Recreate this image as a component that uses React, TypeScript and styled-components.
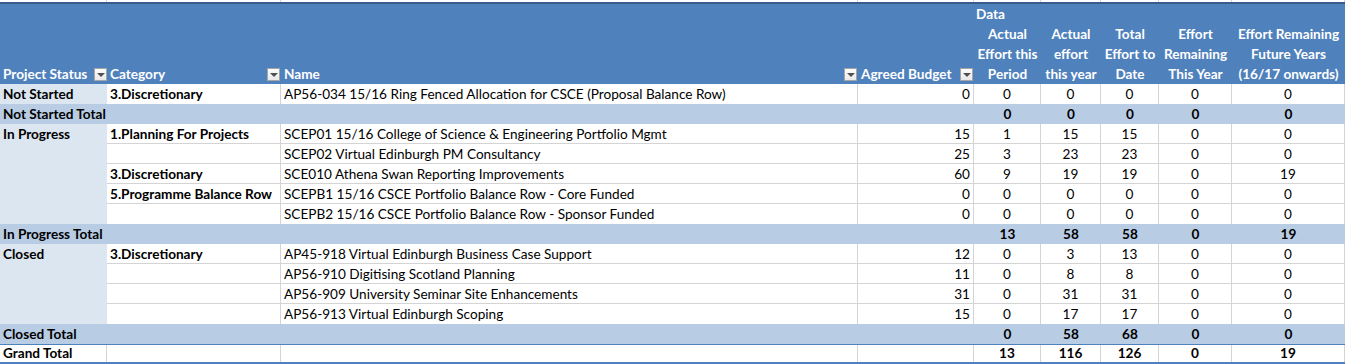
import React from 'react';
import styled, { createGlobalStyle } from 'styled-components';

const COLS = '107px 174px 577px 116px 67px 60px 58px 73px 113px';
const GRID = '#D4D4D4';
const HEAD = '#4F81BD';
const DARK = '#385D8A';
const TOTAL = '#B8CCE4';
const STATUS = '#DCE6F1';

const GlobalStyle = createGlobalStyle`
  html, body { margin: 0; padding: 0; background: #ffffff; }
  body { font-family: Lato, "Open Sans", sans-serif; }
`;

const Sheet = styled.div`
  width: 1345px;
  font-family: Lato, "Open Sans", sans-serif;
  font-size: 13.6px;
  color: #000;
`;

const GridRow = styled.div`
  display: grid;
  grid-template-columns: ${COLS};
`;

const TopStrip = styled(GridRow)`
  height: 2px;
  border-bottom: 2px solid ${DARK};
`;

const StripCell = styled.div`
  border-right: 1px solid ${GRID};
`;

const Header = styled.div`
  display: grid;
  grid-template-columns: ${COLS};
  grid-template-rows: repeat(4, 20px);
  background: ${HEAD};
  color: #fff;
  font-weight: 700;
  line-height: 20px;
  white-space: nowrap;
`;

const HeadLabel = styled.div<{ $col: number }>`
  grid-column: ${(p) => p.$col};
  grid-row: 4;
  display: flex;
  align-items: center;
  justify-content: space-between;
  padding-left: 3px;
  padding-right: ${(p) => (p.$col === 1 ? 0 : 1)}px;
  min-width: 0;
`;

const FilterButton = styled.span`
  width: 13px;
  height: 13px;
  box-sizing: border-box;
  border: 1px solid #a6a6a6;
  background: linear-gradient(#fdfdfd, #e9e9e9);
  display: flex;
  align-items: center;
  justify-content: center;
  flex-shrink: 0;
  &::after {
    content: '';
    width: 0;
    height: 0;
    border-left: 4px solid transparent;
    border-right: 4px solid transparent;
    border-top: 4px solid #505050;
    margin-top: 1px;
  }
`;

const DataTitle = styled.div`
  grid-column: 5;
  grid-row: 1;
  padding-left: 2px;
`;

const HeadMeasure = styled.div<{ $col: number }>`
  grid-column: ${(p) => p.$col};
  grid-row: 2 / span 3;
  display: flex;
  flex-direction: column;
  align-items: center;
  overflow: visible;
`;

const Row = styled(GridRow)<{ $variant: 'data' | 'total' | 'grand' }>`
  height: 20px;
  box-sizing: border-box;
  line-height: ${(p) => (p.$variant === 'grand' ? 17 : 20)}px;
  background: ${(p) => (p.$variant === 'total' ? TOTAL : '#fff')};
  font-weight: ${(p) => (p.$variant === 'data' ? 400 : 700)};
  border-top: ${(p) => (p.$variant === 'grand' ? `1px solid ${HEAD}` : 'none')};
  border-bottom: ${(p) => (p.$variant === 'grand' ? `2px solid ${HEAD}` : 'none')};
  white-space: nowrap;
`;

const StatusCell = styled.div<{ $grand?: boolean }>`
  background: ${(p) => (p.$grand ? '#fff' : STATUS)};
  font-weight: 700;
  padding-left: 3px;
  border-right: ${(p) => (p.$grand ? `1px solid ${GRID}` : 'none')};
`;

const Cell = styled.div<{ $align?: 'left' | 'right' | 'center'; $bold?: boolean; $lastInGroup?: boolean; $grand?: boolean }>`
  box-sizing: border-box;
  border-right: 1px solid ${GRID};
  border-bottom: ${(p) => (p.$grand || p.$lastInGroup ? 'none' : `1px solid ${GRID}`)};
  text-align: ${(p) => p.$align ?? 'left'};
  font-weight: ${(p) => (p.$bold ? 700 : 'inherit')};
  padding: ${(p) => (p.$align === 'right' ? '0 3px 0 0' : p.$align === 'center' ? '0' : '0 0 0 3px')};
  overflow: hidden;
`;

const TotalLabel = styled.div`
  grid-column: 1 / span 4;
  padding-left: 3px;
`;

const TotalValue = styled.div`
  text-align: center;
`;

type DataRow = {
  kind: 'data';
  status?: string;
  category?: string;
  name: string;
  budget: number;
  vals: number[];
  last?: boolean;
};
type TotalRow = { kind: 'total' | 'grand'; label: string; vals: number[] };

const rows: (DataRow | TotalRow)[] = [
  { kind: 'data', status: 'Not Started', category: '3.Discretionary', name: 'AP56-034 15/16 Ring Fenced Allocation for CSCE (Proposal Balance Row)', budget: 0, vals: [0, 0, 0, 0, 0], last: true },
  { kind: 'total', label: 'Not Started Total', vals: [0, 0, 0, 0, 0] },
  { kind: 'data', status: 'In Progress', category: '1.Planning For Projects', name: 'SCEP01 15/16 College of Science & Engineering Portfolio Mgmt', budget: 15, vals: [1, 15, 15, 0, 0] },
  { kind: 'data', name: 'SCEP02 Virtual Edinburgh PM Consultancy', budget: 25, vals: [3, 23, 23, 0, 0] },
  { kind: 'data', category: '3.Discretionary', name: 'SCE010 Athena Swan Reporting Improvements', budget: 60, vals: [9, 19, 19, 0, 19] },
  { kind: 'data', category: '5.Programme Balance Row', name: 'SCEPB1 15/16 CSCE Portfolio Balance Row - Core Funded', budget: 0, vals: [0, 0, 0, 0, 0] },
  { kind: 'data', name: 'SCEPB2 15/16 CSCE Portfolio Balance Row - Sponsor Funded', budget: 0, vals: [0, 0, 0, 0, 0], last: true },
  { kind: 'total', label: 'In Progress Total', vals: [13, 58, 58, 0, 19] },
  { kind: 'data', status: 'Closed', category: '3.Discretionary', name: 'AP45-918 Virtual Edinburgh Business Case Support', budget: 12, vals: [0, 3, 13, 0, 0] },
  { kind: 'data', name: 'AP56-910 Digitising Scotland Planning', budget: 11, vals: [0, 8, 8, 0, 0] },
  { kind: 'data', name: 'AP56-909 University Seminar Site Enhancements', budget: 31, vals: [0, 31, 31, 0, 0] },
  { kind: 'data', name: 'AP56-913 Virtual Edinburgh Scoping', budget: 15, vals: [0, 17, 17, 0, 0], last: true },
  { kind: 'total', label: 'Closed Total', vals: [0, 58, 68, 0, 0] },
  { kind: 'grand', label: 'Grand Total', vals: [13, 116, 126, 0, 19] },
];

const measures: string[][] = [
  ['Actual', 'Effort this', 'Period'],
  ['Actual', 'effort', 'this year'],
  ['Total', 'Effort to', 'Date'],
  ['Effort', 'Remaining', 'This Year'],
  ['Effort Remaining', 'Future Years', '(16/17 onwards)'],
];

export default function App() {
  return (
    <Sheet>
      <GlobalStyle />
      <TopStrip>
        {Array.from({ length: 9 }).map((_, i) => (
          <StripCell key={i} />
        ))}
      </TopStrip>
      <Header>
        <HeadLabel $col={1}>
          Project Status
          <FilterButton />
        </HeadLabel>
        <HeadLabel $col={2}>
          Category
          <FilterButton />
        </HeadLabel>
        <HeadLabel $col={3}>
          Name
          <FilterButton />
        </HeadLabel>
        <HeadLabel $col={4}>
          Agreed Budget
          <FilterButton />
        </HeadLabel>
        <DataTitle>Data</DataTitle>
        {measures.map((lines, i) => (
          <HeadMeasure key={i} $col={5 + i}>
            {lines.map((l) => (
              <span key={l}>{l}</span>
            ))}
          </HeadMeasure>
        ))}
      </Header>
      {rows.map((r, idx) => {
        if (r.kind === 'data') {
          return (
            <Row key={idx} $variant="data">
              <StatusCell>{r.status ?? ''}</StatusCell>
              <Cell $bold $lastInGroup={r.last}>{r.category ?? ''}</Cell>
              <Cell $lastInGroup={r.last}>{r.name}</Cell>
              <Cell $align="right" $lastInGroup={r.last}>{r.budget}</Cell>
              {r.vals.map((v, i) => (
                <Cell key={i} $align="center" $lastInGroup={r.last}>
                  {v}
                </Cell>
              ))}
            </Row>
          );
        }
        if (r.kind === 'total') {
          return (
            <Row key={idx} $variant="total">
              <TotalLabel>{r.label}</TotalLabel>
              {r.vals.map((v, i) => (
                <TotalValue key={i}>{v}</TotalValue>
              ))}
            </Row>
          );
        }
        return (
          <Row key={idx} $variant="grand">
            <StatusCell $grand>{r.label}</StatusCell>
            <Cell $grand />
            <Cell $grand />
            <Cell $grand />
            {r.vals.map((v, i) => (
              <Cell key={i} $grand $align="center">
                {v}
              </Cell>
            ))}
          </Row>
        );
      })}
    </Sheet>
  );
}
